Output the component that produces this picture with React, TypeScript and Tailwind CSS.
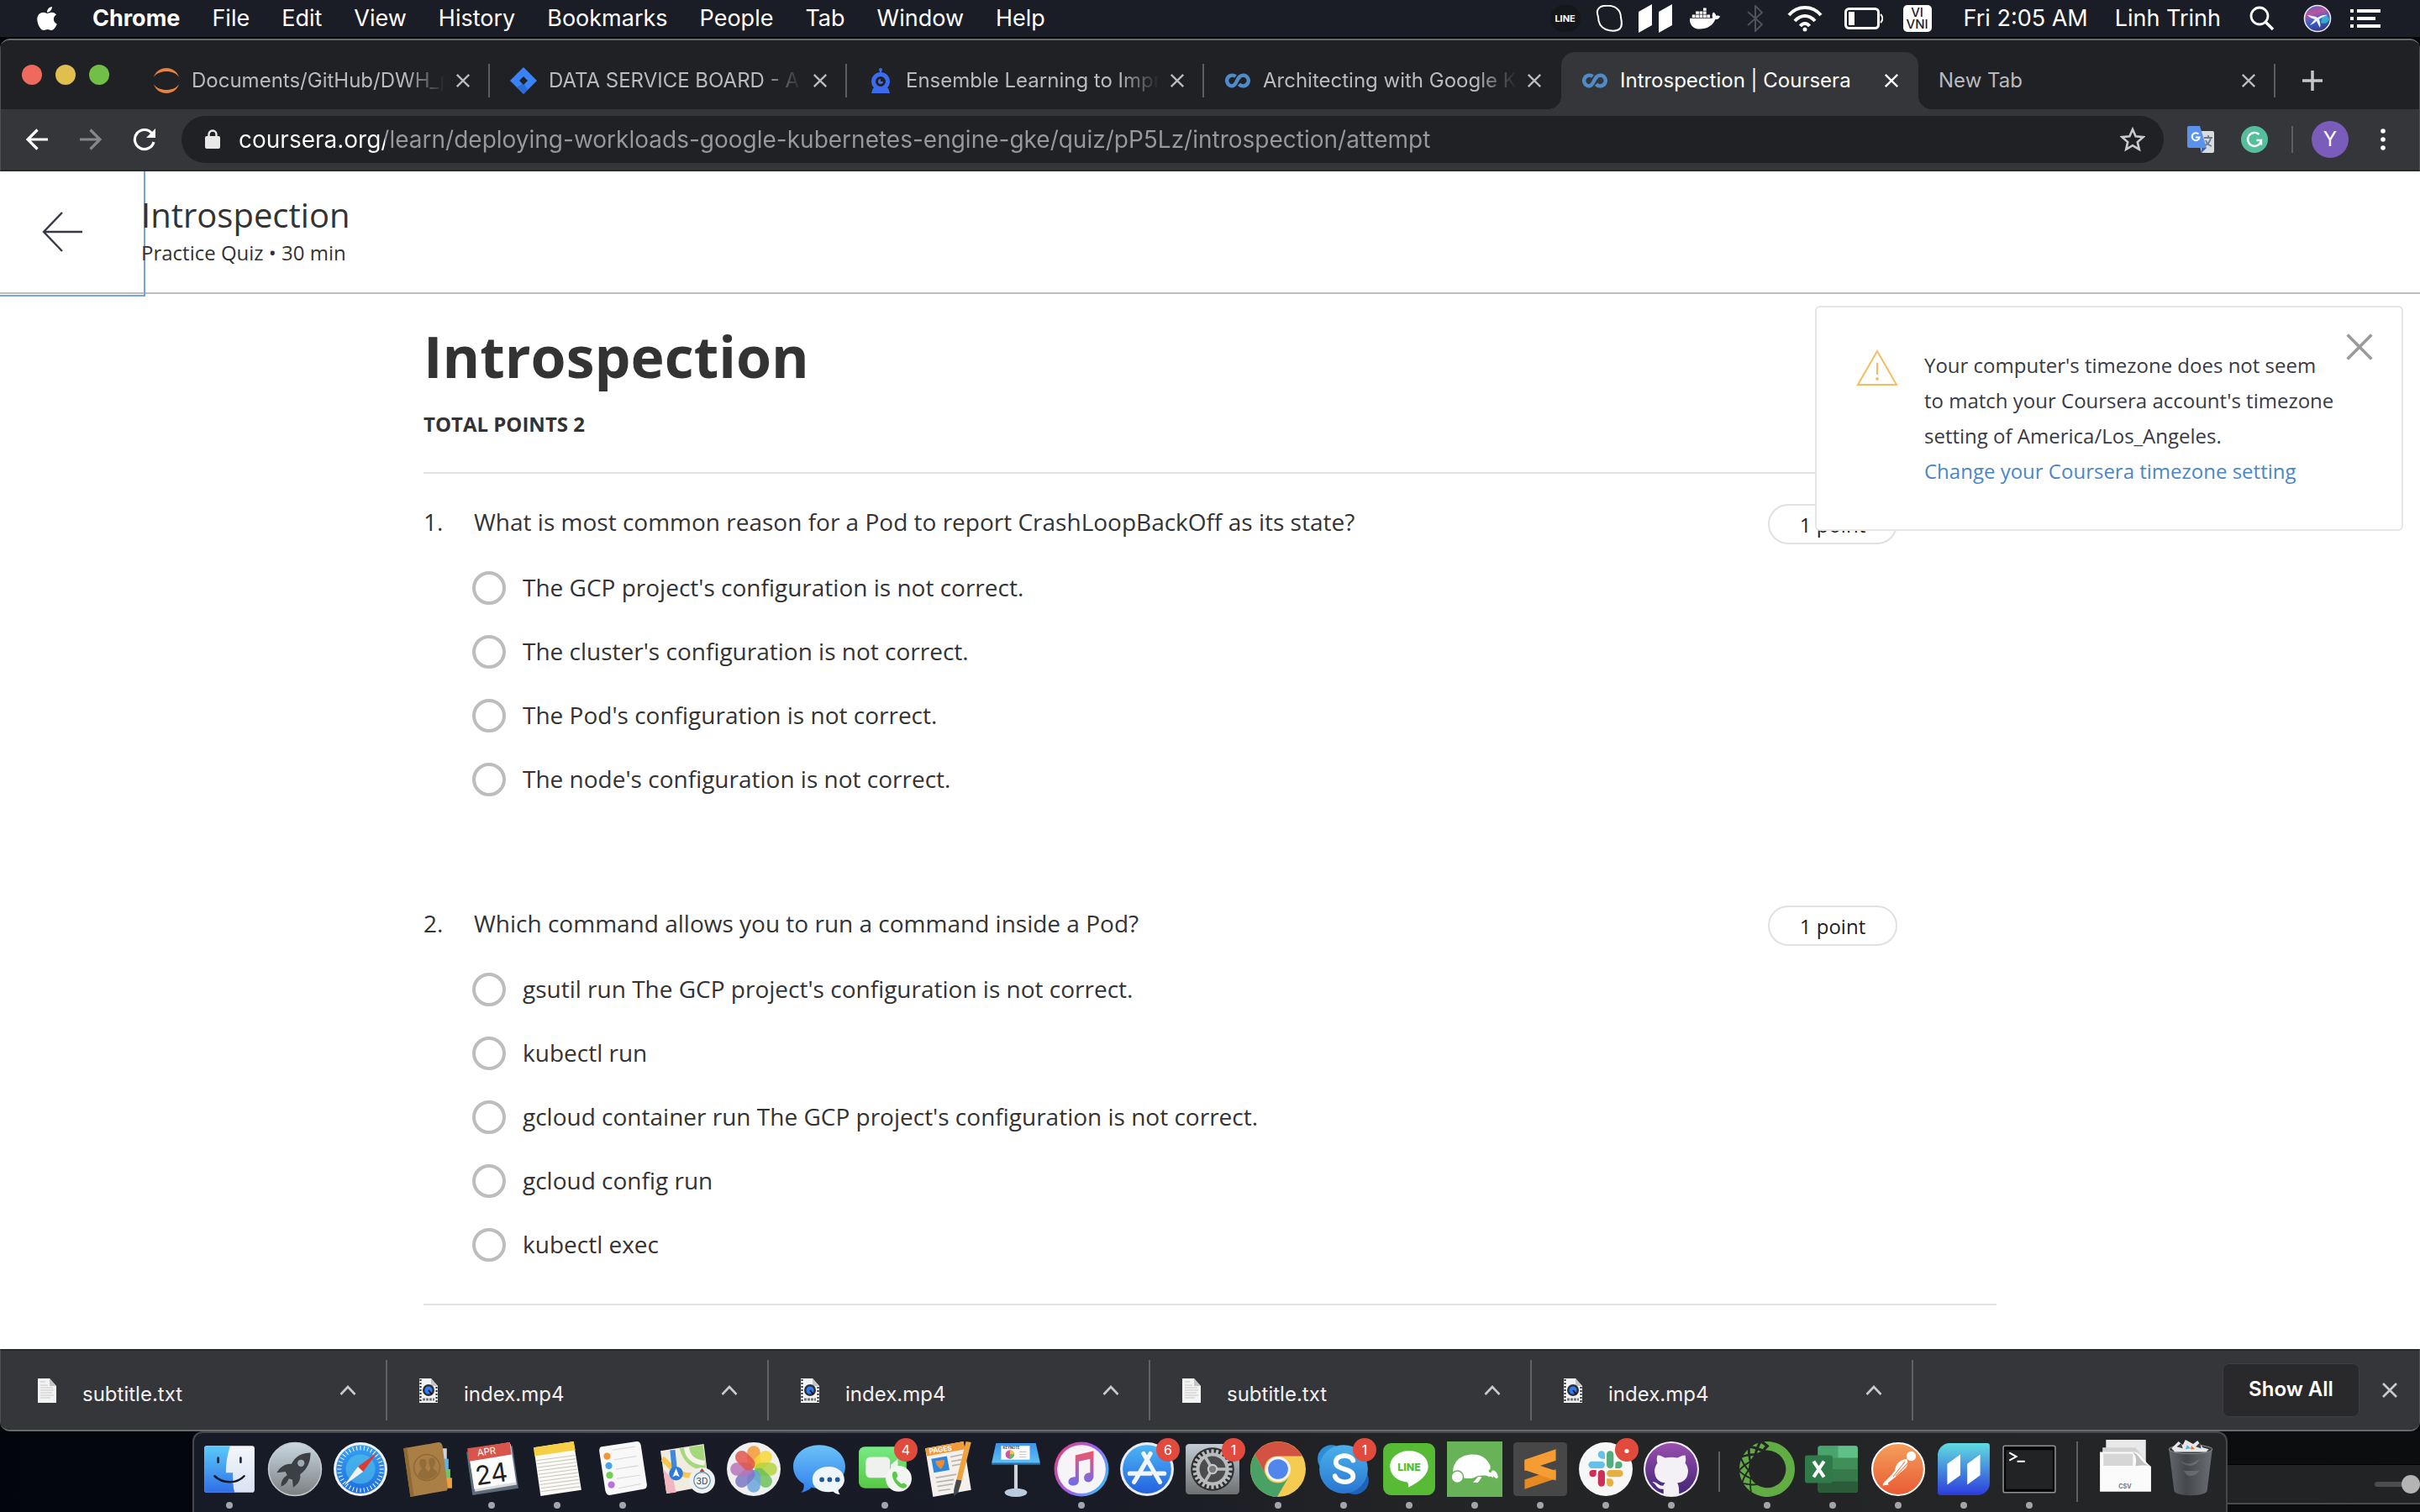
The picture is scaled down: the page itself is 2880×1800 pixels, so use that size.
import type { ReactNode } from "react";
import { FaApple, FaDocker } from "react-icons/fa";
import { SiAnaconda } from "react-icons/si";

/* ---------- small shared icons ---------- */

function CloseIcon({ className, width = 2.6 }: { className: string; width?: number }) {
  return (
    <svg viewBox="0 0 20 20" className={className} fill="none" stroke="currentColor" strokeWidth={width}>
      <path d="M2 2 18 18M18 2 2 18" />
    </svg>
  );
}

function JupyterIcon() {
  return (
    <svg viewBox="0 0 32 32" className="size-8" fill="#e8833f">
      <path d="M1 12C3 5 9 1 16 1s13 4 15 11c-3-5-9-7-15-7S4 7 1 12Z" />
      <path d="M1 20c2 7 8 11 15 11s13-4 15-11c-3 5-9 7-15 7S4 25 1 20Z" />
    </svg>
  );
}

function JiraIcon() {
  return (
    <svg viewBox="0 0 32 32" className="size-8">
      <path d="M16 0 32 16 16 32 0 16Z" fill="#3b82f6" />
      <path d="M16 32 8 24l8-5 5 8Z" fill="#2563c9" opacity=".7" />
      <path d="M16 11 21 16 16 21 11 16Z" fill="#202124" />
    </svg>
  );
}

function EnsembleIcon() {
  return (
    <svg viewBox="0 0 32 32" className="size-8" fill="none">
      <circle cx="16" cy="3" r="2" fill="#3b6cf0" />
      <path d="M16 4v5" stroke="#3b6cf0" strokeWidth="2" />
      <circle cx="16" cy="17" r="8.5" stroke="#3b6cf0" strokeWidth="5" />
      <path d="M7 25h18l2 6H5Z" fill="#3b6cf0" />
      <path d="M16 14a3 3 0 1 0 3 3h-3Z" fill="#3b6cf0" />
    </svg>
  );
}

function CourseraIcon() {
  return (
    <svg viewBox="0 0 32 18" className="w-8" fill="none" stroke="#4f8bc9" strokeWidth="4.4">
      <path d="M13.500 4A6.400 6.400 0 1 0 9 15.400C15.500 15.400 14.500 2.600 22.500 2.600a6.400 6.400 0 1 1-5 10.600" />
    </svg>
  );
}

/* ---------- menu bar ---------- */

const menus = ["File", "Edit", "View", "History", "Bookmarks", "People", "Tab", "Window", "Help"];

function MenuBar() {
  return (
    <header className="flex h-[44px] shrink-0 items-center bg-[#1a1c26] pr-[47px] pl-[40px] text-[27px] text-white">
      <FaApple className="mr-[38px] size-[32px]" />
      <nav className="flex items-center gap-[38px]">
        <button className="font-bold">Chrome</button>
        {menus.map((m) => (
          <button key={m}>{m}</button>
        ))}
      </nav>
      <div className="ml-auto flex items-center">
        <span className="flex h-8 w-9 items-center justify-center rounded-full bg-[#16171b] text-[11px] font-bold">LINE</span>
        <svg viewBox="0 0 32 32" className="ml-[18px] size-8" fill="none" stroke="#fff" strokeWidth="2">
          <path d="M6 2C10 0 21 0 25 4c4 3 5 7 5 11 1 5 2 9-1 13-4 4-12 3-17 1C5 26 3 20 3 14 1 9 1 5 6 2Z" />
        </svg>
        <svg viewBox="0 0 42 36" className="ml-[18px] h-9 w-[42px]" fill="#fff">
          <path d="M1 10 17 1v25L1 35ZM25 10 41 1v25l-16 9Z" />
        </svg>
        <FaDocker className="ml-[20px] size-[36px]" />
        <svg viewBox="0 0 20 32" className="ml-[32px] h-8 w-5" fill="none" stroke="#50525a" strokeWidth="2">
          <path d="m1 8 17 15-8 8V1l8 8L1 24" />
        </svg>
        <svg viewBox="0 0 42 32" className="ml-[28px] h-8 w-[42px]" fill="none" stroke="#fff" strokeWidth="4">
          <path d="M2 12C12 0 30 0 40 12M9 19c7-8 17-8 24 0M15.500 25c3-4 8-4 11 0" />
          <circle cx="21" cy="29" r="1.500" fill="#fff" strokeWidth="2" />
        </svg>
        <svg viewBox="0 0 46 26" className="ml-[26px] h-[26px] w-[46px]" fill="none" stroke="#fff" strokeWidth="3">
          <rect x="1.500" y="1.500" width="39" height="23" rx="4" />
          <rect x="5" y="5" width="7" height="16" fill="#fff" stroke="none" />
          <path d="M43 8c3 3 3 7 0 10" strokeWidth="2" />
        </svg>
        <span className="ml-[24px] flex h-8 w-[34px] flex-col items-center justify-center rounded-[5px] bg-white text-[15px] leading-[14px] font-medium text-[#1a1c26]">
          <span>VI</span>
          <span>VNI</span>
        </span>
        <span className="ml-[38px]">Fri 2:05 AM</span>
        <span className="ml-[32px]">Linh Trinh</span>
        <svg viewBox="0 0 30 30" className="ml-[34px] size-[30px]" fill="none" stroke="#fff" strokeWidth="2.800">
          <circle cx="12" cy="12" r="10" />
          <path d="m19 19 9 9" strokeWidth="3.400" />
        </svg>
        <svg viewBox="0 0 34 34" className="ml-[34px] size-[34px]">
          <defs>
            <linearGradient id="siri" x1=".2" y1="0" x2=".5" y2="1">
              <stop offset="0" stopColor="#4a63c8" />
              <stop offset=".3" stopColor="#c0559c" />
              <stop offset=".6" stopColor="#3a5fd0" />
              <stop offset="1" stopColor="#3a3a8a" />
            </linearGradient>
          </defs>
          <circle cx="17" cy="17" r="15.500" fill="url(#siri)" stroke="#e8e8f0" strokeWidth="1.600" />
          <path d="M23 14c5-1 7 0 8 4-2 5-6 6-10 4Z" fill="#35c3c9" opacity=".8" />
          <path d="M5 13c5 1 9 1 12 3 4-2 7-4 12-3-5 2-8 3-10 5 1 3 2 7 1 10-2-3-3-6-4-8-2 2-5 4-8 5 2-3 4-5 6-7-4-1-6-2-9-5Z" fill="#e9f4ff" />
        </svg>
        <svg viewBox="0 0 36 22" className="ml-[22px] h-[22px] w-9" fill="#fff">
          <path d="M0 0h4v4H0zM8 0h28v4H8zM0 9h4v4H0zM8 9h22v4H8zM0 18h4v4H0zM8 18h28v4H8z" />
        </svg>
      </div>
    </header>
  );
}

/* ---------- browser chrome ---------- */

type TabInfo = { title: string; icon?: ReactNode; active?: boolean; divider?: boolean; fade?: boolean };

const tabs: TabInfo[] = [
  { title: "Documents/GitHub/DWH_p", icon: <JupyterIcon />, divider: true, fade: true },
  { title: "DATA SERVICE BOARD - A", icon: <JiraIcon />, divider: true, fade: true },
  { title: "Ensemble Learning to Impr", icon: <EnsembleIcon />, divider: true, fade: true },
  { title: "Architecting with Google K", icon: <CourseraIcon />, fade: true },
  { title: "Introspection | Coursera", icon: <CourseraIcon />, active: true },
  { title: "New Tab", divider: true },
];

const activeTab =
  "relative rounded-t-[16px] bg-[#35363a] text-white before:absolute before:bottom-0 before:-left-4 before:size-4 before:bg-[radial-gradient(circle_at_0_0,transparent_16px,#35363a_16px)] after:absolute after:-right-4 after:bottom-0 after:size-4 after:bg-[radial-gradient(circle_at_100%_0,transparent_16px,#35363a_16px)]";

function Tab({ tab }: { tab: TabInfo }) {
  return (
    <div className={`flex h-[68px] w-[425px] min-w-0 items-center pl-6 ${tab.active ? activeTab : "text-[#b9bbbe]"}`}>
      {tab.icon && <span className="mr-[14px] flex w-8 shrink-0">{tab.icon}</span>}
      <span
        className={`flex-1 overflow-hidden text-[24px] whitespace-nowrap ${
          tab.fade ? "[mask-image:linear-gradient(to_right,#000_calc(100%-48px),transparent)]" : ""
        }`}
      >
        {tab.title}
      </span>
      <button aria-label={`Close ${tab.title}`} className="mr-[21px] ml-[12px]">
        <CloseIcon className="size-[18px]" />
      </button>
      <span className={`h-10 w-[2px] ${tab.divider ? "bg-[#5b5d61]" : ""}`} />
    </div>
  );
}

function TabStrip() {
  return (
    <div className="flex h-[82px] shrink-0 items-end border-x border-[#4d4f51] bg-[#202124]">
      <div className="flex h-full w-[157px] shrink-0 items-center gap-4 pl-[25px]">
        <button aria-label="Close window" className="size-6 rounded-full bg-[#ee6a5e]" />
        <button aria-label="Minimise window" className="size-6 rounded-full bg-[#e0bf4e]" />
        <button aria-label="Zoom window" className="size-6 rounded-full bg-[#72bf47]" />
      </div>
      {tabs.map((t) => (
        <Tab key={t.title} tab={t} />
      ))}
      <button aria-label="New tab" className="ml-[32px] flex h-[68px] items-center text-[#c4c6c9]">
        <svg viewBox="0 0 24 24" className="size-6" stroke="currentColor" strokeWidth="3.500">
          <path d="M12 0v24M0 12h24" />
        </svg>
      </button>
    </div>
  );
}

function Toolbar() {
  return (
    <div className="flex h-[74px] shrink-0 items-center border-x border-b-2 border-x-[#4d4f51] border-b-[#28292c] bg-[#35363a] pr-[34px] pl-[30px]">
      <button aria-label="Back" className="text-white">
        <svg viewBox="0 0 26 26" className="size-[26px]" fill="none" stroke="currentColor" strokeWidth="3.200">
          <path d="M26 13H2M13.500 1.500 2 13l11.500 11.500" />
        </svg>
      </button>
      <button aria-label="Forward" className="ml-[38px] text-[#85878a]">
        <svg viewBox="0 0 26 26" className="size-[26px]" fill="none" stroke="currentColor" strokeWidth="3.200">
          <path d="M0 13h24M12.500 1.500 24 13 12.500 24.500" />
        </svg>
      </button>
      <button aria-label="Reload" className="ml-[37px] text-white">
        <svg viewBox="0 0 28 28" className="size-7" fill="none" stroke="currentColor" strokeWidth="3.200">
          <path d="M23 7a11.500 11.500 0 1 0 2 10" />
          <path d="M27 1v11H16Z" fill="currentColor" stroke="none" />
        </svg>
      </button>
      <div className="ml-[30px] flex h-14 flex-1 items-center rounded-full bg-[#202124] pr-[22px] pl-7">
        <svg viewBox="0 0 18 24" className="h-6 w-[18px]" fill="#e8e8e8">
          <rect y="8" width="18" height="15" rx="2" />
          <path d="M4.500 9V6a4.500 4.500 0 0 1 9 0v3" fill="none" stroke="#e8e8e8" strokeWidth="2.400" />
        </svg>
        <input
          aria-label="Address"
          defaultValue="coursera.org/learn/deploying-workloads-google-kubernetes-engine-gke/quiz/pP5Lz/introspection/attempt"
          className="ml-[22px] flex-1 bg-[linear-gradient(to_right,#fff_174px,#97999c_174px)] bg-clip-text text-[28px] text-transparent outline-none"
        />
        <button aria-label="Bookmark this page" className="text-[#c9cacc]">
          <svg viewBox="0 0 30 30" className="size-[30px]" fill="none" stroke="currentColor" strokeWidth="2.600">
            <path d="m15 3 3.600 8.300 9 .8-6.800 6 2 8.800L15 22.200l-7.800 4.700 2-8.800-6.800-6 9-.8Z" />
          </svg>
        </button>
      </div>
      <button aria-label="Translate" className="ml-[27px]">
        <svg viewBox="0 0 34 34" className="size-[34px]">
          <path d="M12 7h19a2 2 0 0 1 2 2v22a2 2 0 0 1-2 2H18Z" fill="#d9dbde" />
          <path d="M1 3a2 2 0 0 1 2-2h13l8 26H3a2 2 0 0 1-2-2Z" fill="#5a93ee" />
          <path d="m18 27 6 0-6 6Z" fill="#3c62c0" />
          <path d="M21 15h10M26 12v3M29 15c-1 5-4 8-7 9M23 18c1 3 4 6 7 7" fill="none" stroke="#6f7c8c" strokeWidth="1.800" />
          <path d="M14.500 10.500a4.500 4.500 0 1 0 1.200 4H11" fill="none" stroke="#fff" strokeWidth="2" />
        </svg>
      </button>
      <button aria-label="Grammarly" className="ml-[30px]">
        <svg viewBox="0 0 34 34" className="size-[34px]">
          <circle cx="17" cy="17" r="16" fill="#55bf9b" />
          <path d="M22.500 11A8 8 0 1 0 25 18h-5.500M25 18v5.500" fill="none" stroke="#fff" strokeWidth="2.400" />
        </svg>
      </button>
      <span className="ml-[27px] h-8 w-[2px] bg-[#5b5d61]" />
      <button className="ml-[22px] flex size-[44px] items-center justify-center rounded-full bg-[#7a5cbb] text-[24px] text-white">Y</button>
      <button aria-label="Chrome menu" className="ml-[32px] p-[6px]">
        <svg viewBox="0 0 6 26" className="h-[26px] w-[6px]" fill="#fff">
          <circle cx="3" cy="3" r="2.800" />
          <circle cx="3" cy="13" r="2.800" />
          <circle cx="3" cy="23" r="2.800" />
        </svg>
      </button>
    </div>
  );
}

/* ---------- quiz page ---------- */

const questions = [
  {
    text: "What is most common reason for a Pod to report CrashLoopBackOff as its state?",
    options: [
      "The GCP project's configuration is not correct.",
      "The cluster's configuration is not correct.",
      "The Pod's configuration is not correct.",
      "The node's configuration is not correct.",
    ],
  },
  {
    text: "Which command allows you to run a command inside a Pod?",
    options: [
      "gsutil run The GCP project's configuration is not correct.",
      "kubectl run",
      "gcloud container run The GCP project's configuration is not correct.",
      "gcloud config run",
      "kubectl exec",
    ],
  },
];

function QuizPage() {
  return (
    <div className="relative flex-1 overflow-hidden bg-white font-['Open_Sans',sans-serif] text-[#333]">
      <div className="flex h-[146px] border-b-2 border-[#bdbdbd]">
        <button
          aria-label="Back to course"
          className="w-[168px] outline-2 outline-offset-[3px] outline-[#76a3e6]"
        >
          <svg viewBox="0 0 48 48" className="ml-[50px] size-12" fill="none" stroke="#373a44" strokeWidth="2.400">
            <path d="M48 24H2M24 1 2 24l22 23" />
          </svg>
        </button>
        <div className="pt-[28px]">
          <p className="text-[40px] leading-[48px]">Introspection</p>
          <p className="text-[24px] leading-[42px]">Practice Quiz • 30 min</p>
        </div>
      </div>

      <main className="mx-auto max-w-[1872px] pt-[34px]">
        <h1 className="text-[68px] leading-[80px] font-bold">Introspection</h1>
        <p className="mt-[25px] text-[24px] leading-8 font-bold">TOTAL POINTS 2</p>
        <hr className="mt-[41px] border-t-2 border-[#e1e1e1]" />
        <div className="mt-9 flex flex-col gap-[130px]">
          {questions.map((q, qi) => (
            <fieldset key={q.text} className="text-[28px] leading-[42px]">
              <div className="flex items-start">
                <span className="w-[60px] shrink-0">{qi + 1}.</span>
                <p className="flex-1">{q.text}</p>
                <span className="mr-[118px] -mb-[6px] flex h-12 w-[154px] shrink-0 items-center justify-center rounded-full border-2 border-[#e1e1e1] pt-[2px] text-[24px] leading-8 text-[#1f1f1f]">
                  1 point
                </span>
              </div>
              <div className="mt-[38px] ml-[58px] flex flex-col gap-9">
                {q.options.map((o, oi) => (
                  <label key={o} htmlFor={`q${qi}-${oi}`} className="flex h-10 items-center">
                    <input
                      id={`q${qi}-${oi}`}
                      type="radio"
                      name={`question-${qi}`}
                      className="size-10 appearance-none rounded-full border-4 border-[#bdbdbd]"
                    />
                    <span className="ml-[20px] pb-[2px]">{o}</span>
                  </label>
                ))}
              </div>
            </fieldset>
          ))}
        </div>
        <hr className="mt-[50px] border-t-2 border-[#e1e1e1]" />
      </main>

      <aside className="absolute top-[160px] right-5 flex w-[700px] rounded-md border-2 border-[#e5e5e5] bg-white py-12 pl-[47px] text-[24px] leading-[42px] text-[#373a44]">
        <svg viewBox="0 0 50 44" className="mt-[2px] h-[44px] w-[50px] shrink-0" fill="none" stroke="#f5bd60" strokeWidth="2">
          <path d="M25 2 48 42H2Z" />
          <path d="M25 16v14" />
          <circle cx="25" cy="35" r="1.400" fill="#f5bd60" strokeWidth="1" />
        </svg>
        <div className="ml-[31px] w-[492px]">
          <p>Your computer's timezone does not seem to match your Coursera account's timezone setting of America/Los_Angeles.</p>
          <a href="#timezone" className="text-[#4a87c9]">
            Change your Coursera timezone setting
          </a>
        </div>
        <button aria-label="Dismiss" className="absolute top-[29px] right-[32px] text-[#9a9a9a]">
          <CloseIcon className="size-[36px]" width={2} />
        </button>
      </aside>
    </div>
  );
}

/* ---------- downloads shelf ---------- */

const downloads = ["subtitle.txt", "index.mp4", "index.mp4", "subtitle.txt", "index.mp4"];

function FileIcon({ video }: { video: boolean }) {
  return (
    <svg viewBox="0 0 22 29" className="h-[29px] w-[22px]">
      <path d="M0 0h14l8 9v20H0Z" fill="#f3f3f3" />
      <path d="M14 0v9h8Z" fill="#c4c4c4" />
      {video ? (
        <>
          <path d="M1.500 1v28M20.500 10v19" stroke="#222" strokeWidth="2" strokeDasharray="2 2" />
          <circle cx="11" cy="14" r="7" fill="#2b3038" />
          <circle cx="11" cy="14" r="4.500" fill="#2f7df6" />
          <path d="m11 14 4 5" stroke="#111" strokeWidth="2" />
          <path d="M4 25h14" stroke="#777" strokeWidth="3" strokeDasharray="3 1" />
        </>
      ) : (
        <path d="M3 4h6M3 8h9M3 11h15M3 14h16M3 17h14M3 20h16M3 23h12" stroke="#c8c8c8" strokeWidth="1" />
      )}
    </svg>
  );
}

function DownloadShelf() {
  return (
    <div className="flex h-[96px] shrink-0 items-center border-x border-t-2 border-x-[#4d4f51] border-t-[#28292c] bg-[#35363a] pr-[25px] pl-[6px] text-[24px] text-[#f1f1f1]">
      {downloads.map((name, i) => (
        <div key={i} className="flex h-[72px] w-[454px] items-center border-r-2 border-[#5f6165] pr-[35px] pl-[38px]">
          <FileIcon video={name.endsWith("mp4")} />
          <span className="ml-[31px] pt-[10px]">{name}</span>
          <button aria-label={`Options for ${name}`} className="ml-auto text-[#c9cacc]">
            <svg viewBox="0 0 20 12" className="w-5" fill="none" stroke="currentColor" strokeWidth="2.600">
              <path d="m1.500 11 8.500-9 8.500 9" />
            </svg>
          </button>
        </div>
      ))}
      <button className="mr-[26px] ml-auto h-16 w-[163px] rounded-lg border border-[#3d3e42] bg-[#29292c] pb-[2px] font-semibold text-white">
        Show All
      </button>
      <button aria-label="Close downloads bar" className="text-[#c9cacc]">
        <CloseIcon className="size-[20px]" />
      </button>
    </div>
  );
}

/* ---------- dock ---------- */

function Gradient({ id, from, to }: { id: string; from: string; to: string }) {
  return (
    <linearGradient id={id} x1="0" y1="0" x2="0" y2="1">
      <stop offset="0" stopColor={from} />
      <stop offset="1" stopColor={to} />
    </linearGradient>
  );
}

function Art({ children }: { children: ReactNode }) {
  return (
    <svg viewBox="0 0 64 64" className="size-[66px] overflow-visible font-[Inter,sans-serif]">
      {children}
    </svg>
  );
}

const petals = ["#f39a34", "#f5d938", "#b5d33d", "#6fbf5a", "#6aa5dd", "#7a78c4", "#b774b8", "#e2574c"];
const ticks = Array.from({ length: 36 }, (_, i) => i * 10);
const teeth = Array.from({ length: 24 }, (_, i) => i * 15);

type DockItem = { name: string; art: ReactNode; running?: boolean; badge?: string };

const apps: DockItem[] = [
  {
    name: "Finder",
    running: true,
    art: (
      <Art>
        <Gradient id="fl" from="#5ccbfa" to="#2f6fe8" />
        <Gradient id="fr" from="#f4f6fa" to="#d9e3f3" />
        <rect x="3" y="5" width="58" height="54" rx="3" fill="url(#fr)" />
        <path d="M6 5h27c-3 9-5 19-5 31h8c0 8 0 16 2 23H6a3 3 0 0 1-3-3V8a3 3 0 0 1 3-3Z" fill="url(#fl)" />
        <path d="M19 19v5M45 19v5" stroke="#1b2a44" strokeWidth="2.600" strokeLinecap="round" />
        <path d="M15 40c9 9 26 9 34 0" fill="none" stroke="#101a2c" strokeWidth="2.400" strokeLinecap="round" />
      </Art>
    ),
  },
  {
    name: "Launchpad",
    art: (
      <Art>
        <Gradient id="lp" from="#c9d8e0" to="#7d7f80" />
        <circle cx="32" cy="32" r="30.500" fill="url(#lp)" stroke="#c6cacc" strokeWidth="1.500" />
        <path d="M50 13c-11 0-18 5-22 13-6-1-13 3-17 10l10-1 2 4c-5 3-7 7-7 13 4-1 7-4 9-9l4 1 1 9c6-4 9-9 8-15 8-6 12-14 12-25Z" fill="#3c4045" />
        <circle cx="39" cy="25" r="4" fill="#9fabb2" />
      </Art>
    ),
  },
  {
    name: "Safari",
    art: (
      <Art>
        <Gradient id="sf" from="#35a0f3" to="#1f6ee0" />
        <circle cx="32" cy="32" r="31" fill="#eef1f4" />
        <circle cx="32" cy="32" r="28" fill="url(#sf)" />
        <circle cx="32" cy="32" r="17" fill="#55c9ea" opacity=".55" />
        {ticks.map((a) => (
          <path key={a} d="M32 5v5" stroke="#fff" strokeWidth="1" transform={`rotate(${a} 32 32)`} />
        ))}
        <path d="M51 13 35 35l-6-6Z" fill="#e4392f" />
        <path d="M13 51 29 29l6 6Z" fill="#f3f3f3" />
      </Art>
    ),
  },
  {
    name: "Contacts",
    art: (
      <Art>
        <path d="M50 8h6v14h-6Z" fill="#cfd4da" />
        <path d="M51 20h7v13h-7Z" fill="#58b7ea" />
        <path d="M53 32h7v12h-7Z" fill="#6cc76a" />
        <path d="M54 42h8v12h-8Z" fill="#f0a13c" />
        <path d="M6 8 46 1c3 0 4 1 5 4l6 48c0 3-1 4-3 4l-40 7Z" fill="#a97f45" />
        <path d="m6 8 4-1 8 56-4 1Z" fill="#8f6a35" />
        <circle cx="33" cy="30" r="15" fill="none" stroke="#8f6a38" strokeWidth="1.500" />
        <path d="M23 40c0-7 4-6 4-9-4-5-3-11 1-11 5 0 6 5 3 10 1 3 3 3 4 6 0-3 2-3 2-6-3-5-3-11 2-11 4 0 5 7 1 11 1 3 5 3 5 7-6 7-15 9-22 3Z" fill="#926d3a" />
      </Art>
    ),
  },
  {
    name: "Calendar",
    running: true,
    art: (
      <Art>
        <path d="m3 12 7 50 53-8L56 5Z" fill="#5e6d7b" />
        <path d="m5 9 8 49 48-8L54 3Z" fill="#dcdcdc" />
        <path d="m5 9 7 46 48-8L53 1Z" fill="#fdfdfd" />
        <path d="m4 8 49-7 2 14-49 8Z" fill="#d9544a" />
        <g transform="rotate(-8 32 32)">
          <text x="29" y="15" fontSize="11" fill="#fff" textAnchor="middle">APR</text>
          <text x="31" y="48" fontSize="30" fill="#222" textAnchor="middle">24</text>
        </g>
      </Art>
    ),
  },
  {
    name: "Notes",
    running: true,
    art: (
      <Art>
        <path d="M5 7 51 0l9 56-47 7Z" fill="#fbfaf4" />
        <path d="M5 7 51 0l2 10L6 17Z" fill="#f6cf45" />
        {[0, 1, 2, 3, 4, 5, 6, 7, 8, 9].map((i) => (
          <path key={i} d="m8 22 45-6" stroke="#c9c9c2" strokeWidth="1" transform={`translate(${i * 0.6} ${i * 4})`} />
        ))}
      </Art>
    ),
  },
  {
    name: "Reminders",
    running: true,
    art: (
      <Art>
        <path d="M8 6 48 0c3 0 4 1 5 4l7 46c0 3-1 5-4 5l-39 7c-3 0-4-2-5-5L5 11c0-3 1-5 3-5Z" fill="#f8f8f8" />
        <circle cx="14" cy="17" r="4" fill="#f0973b" />
        <circle cx="16" cy="28" r="4" fill="#43a5ee" />
        <circle cx="17" cy="39" r="4" fill="#72cf52" />
        <circle cx="19" cy="50" r="4" fill="#b873d8" />
        <path d="m20 10 26-4M22 21l26-4M24 32l26-4M25 43l27-4M27 54l26-5" stroke="#d6d6d6" strokeWidth="1" />
      </Art>
    ),
  },
  {
    name: "Maps",
    art: (
      <Art>
        <path d="m0 11 50-8 6 48-49 9Z" fill="#f1ece0" />
        <path d="m22 8 27-4 4 30C37 33 26 24 22 8Z" fill="#a5d87c" />
        <path d="M30 7c1 10 8 17 21 18" fill="none" stroke="#f6f3ec" strokeWidth="6" />
        <path d="m3 32 12 12 3 15-11 1Z" fill="#f2b6c0" />
        <path d="M2 20c8 4 14 24 44 18" fill="none" stroke="#f7c64d" strokeWidth="6" />
        <path d="m14 10 3 30" stroke="#3f88dd" strokeWidth="6" />
        <circle cx="18" cy="37" r="8" fill="#2f7bdb" />
        <path d="m18 31 4 10-4-2-4 2Z" fill="#fff" />
        <circle cx="48" cy="45" r="15" fill="#eef0f2" />
        <circle cx="48" cy="45" r="9.500" fill="none" stroke="#5a8aa8" strokeWidth="1.200" />
        <path d="m48 31 3 4h-6Z" fill="#d8362d" />
        <text x="48" y="49" fontSize="10" fill="#444" textAnchor="middle">3D</text>
      </Art>
    ),
  },
  {
    name: "Photos",
    art: (
      <Art>
        <circle cx="32" cy="32" r="31" fill="#f0f0f0" />
        {petals.map((c, i) => (
          <rect key={c} x="24.500" y="5" width="15" height="26" rx="7.500" fill={c} opacity=".85" transform={`rotate(${i * 45} 32 32)`} />
        ))}
      </Art>
    ),
  },
  {
    name: "Messages",
    art: (
      <Art>
        <Gradient id="ms" from="#6cc2f7" to="#2f7fee" />
        <path d="M32 4c17 0 30 11 30 25S49 54 32 54c-4 0-6 0-9-1-3 3-7 5-12 6 3-3 4-6 3-10C6 44 2 37 2 29 2 15 15 4 32 4Z" fill="url(#ms)" />
        <path d="M43 29c10 0 18 6 18 15 0 5-3 9-7 12 0 2 1 4 2 5-4 0-6-1-8-3-15 2-24-5-24-14s8-15 19-15Z" fill="#eef6fb" />
        <circle cx="35" cy="44" r="2.800" fill="#22589e" />
        <circle cx="44" cy="44" r="2.800" fill="#22589e" />
        <circle cx="53" cy="44" r="2.800" fill="#22589e" />
      </Art>
    ),
  },
  {
    name: "FaceTime",
    running: true,
    badge: "4",
    art: (
      <Art>
        <Gradient id="ft" from="#77ea84" to="#58c944" />
        <rect x="2" y="6" width="55" height="48" rx="7" fill="url(#ft)" />
        <rect x="10" y="18" width="28" height="24" rx="5" fill="#eef1ee" />
        <path d="m39 27 8-7v20l-8-6Z" fill="#eef1ee" />
        <circle cx="48" cy="43" r="15" fill="#f3f5f3" />
        <path d="M41 36c2-2 4-2 5 1l1 3-2 3c2 3 4 4 6 6l3-1 3 2c1 2-1 4-3 4-7 0-15-11-13-18Z" fill="#5bcb47" />
      </Art>
    ),
  },
  {
    name: "Pages",
    art: (
      <Art>
        <path d="M3 8 47 0l9 56-44 8Z" fill="#f4f1ec" />
        <path d="M3 8 47 0l2 9L5 17Z" fill="#f2993a" />
        <text x="8" y="14" fontSize="8" fontWeight="700" fill="#fff" transform="rotate(-8 8 14)">PAGES</text>
        <path d="m10 20 18-3 3 16-18 3Z" fill="#2f86dd" />
        <path d="M15 22c4 1 6-1 10-1 1 5-2 8-4 11-3-3-6-5-6-10Z" fill="#f18a2c" />
        <path d="m32 18 14-3M33 23l12-2M34 28l11-2M15 42l24-4M16 47l20-3M17 52l18-3M18 57l14-2" stroke="#b7b3ad" strokeWidth="1.600" />
        <path d="m50 0 6 1-13 52-6-1Z" fill="#f0a23c" />
        <path d="m39 44 6 1-4 14-5 4 0-7Z" fill="#44474b" />
      </Art>
    ),
  },
  {
    name: "Keynote",
    art: (
      <Art>
        <Gradient id="kn" from="#3d93ea" to="#5fc0f5" />
        <path d="M9 2h46l5 23H4Z" fill="url(#kn)" />
        <path d="M4 25h56v2H4Z" fill="#2d6fae" />
        <rect x="15" y="5" width="33" height="16" fill="#fbfbfb" />
        <text x="17" y="9" fontSize="4" fontWeight="700" fill="#444">KEYNOTE</text>
        <circle cx="25" cy="15" r="5" fill="#d34fae" />
        <path d="M25 15v-5a5 5 0 0 1 5 5Z" fill="#f6c63d" />
        <path d="M25 15h5a5 5 0 0 1-5 5Z" fill="#5fc05a" />
        <path d="M36 12h8M36 15h8M36 18h8" stroke="#c9c9c9" />
        <path d="M32 27v33" stroke="#cdd3d8" strokeWidth="4" />
        <ellipse cx="32" cy="59" rx="13" ry="5" fill="#b9cbe0" />
      </Art>
    ),
  },
  {
    name: "iTunes",
    running: true,
    art: (
      <Art>
        <linearGradient id="it" x1="0" y1=".2" x2="1" y2=".8">
          <stop offset="0" stopColor="#e0417c" />
          <stop offset=".5" stopColor="#a25df0" />
          <stop offset="1" stopColor="#36c3f2" />
        </linearGradient>
        <Gradient id="note" from="#f2566a" to="#6a6df0" />
        <circle cx="32" cy="32" r="31.500" fill="url(#it)" />
        <circle cx="32" cy="32" r="28" fill="#f6f4f7" />
        <path d="M25 16 46 11v29c0 4-3 7-6 7s-5-2-5-5c0-4 3-6 7-6V20l-13 3v22c0 4-3 6-7 6-3 0-5-2-5-4 0-4 3-6 8-6Z" fill="url(#note)" />
      </Art>
    ),
  },
  {
    name: "App Store",
    badge: "6",
    art: (
      <Art>
        <Gradient id="as" from="#4cb6f5" to="#2362e0" />
        <circle cx="32" cy="32" r="31" fill="#e9edf2" />
        <circle cx="32" cy="32" r="28" fill="url(#as)" />
        <path d="m36 14-17 30M28 14l19 33M12 37h24M44 37h8M17 47l2-3" stroke="#f2f6fa" strokeWidth="5" strokeLinecap="round" />
      </Art>
    ),
  },
  {
    name: "System Preferences",
    badge: "1",
    art: (
      <Art>
        <Gradient id="sp" from="#c2ccd4" to="#6f7072" />
        <rect x="1" y="3" width="62" height="58" rx="4" fill="url(#sp)" />
        <circle cx="32" cy="32" r="25" fill="#2e2f31" />
        {teeth.map((a) => (
          <rect key={a} x="30.500" y="9" width="3" height="6" fill="#b9bbbd" transform={`rotate(${a} 32 32)`} />
        ))}
        <circle cx="32" cy="32" r="17" fill="#4b4c4e" stroke="#b9bbbd" strokeWidth="4" />
        <path d="M32 32h17M32 32 23 17M32 32l-9 15" stroke="#b9bbbd" strokeWidth="3.500" />
        <circle cx="32" cy="32" r="5" fill="#77797b" stroke="#c8cacc" strokeWidth="2" />
      </Art>
    ),
  },
  {
    name: "Google Chrome",
    running: true,
    art: (
      <Art>
        <circle cx="32" cy="32" r="32" fill="#f6cb52" />
        <path d="M5 15a32 32 0 0 1 55 2H32a15 15 0 0 0-14 22Z" fill="#d35343" />
        <path d="M5 15a32 32 0 0 0 26 49l14-24a15 15 0 0 1-27-1Z" fill="#4aa165" />
        <circle cx="32" cy="32" r="14.500" fill="#f4f4f4" />
        <circle cx="32" cy="32" r="11.500" fill="#5187ec" />
      </Art>
    ),
  },
  {
    name: "Skype",
    running: true,
    badge: "1",
    art: (
      <Art>
        <Gradient id="sk" from="#4bb2ea" to="#2b76d2" />
        <circle cx="18" cy="20" r="16" fill="#2f8fd6" />
        <circle cx="45" cy="45" r="16" fill="#1f62b8" />
        <circle cx="32" cy="32" r="28" fill="url(#sk)" />
        <path d="M43 22c-3-8-20-7-20 2 0 10 20 6 20 16 0 9-18 9-21 0" fill="none" stroke="#fff" strokeWidth="5.500" strokeLinecap="round" />
      </Art>
    ),
  },
  {
    name: "LINE",
    running: true,
    art: (
      <Art>
        <rect x="2" y="2" width="60" height="60" rx="9" fill="#57bb35" />
        <path d="M32 11c13 0 22 8 22 18 0 9-9 17-23 24 0-3 0-5-1-6-12-1-20-9-20-18 0-10 9-18 22-18Z" fill="#fff" />
        <text x="32" y="34" fontSize="12" fontWeight="800" fill="#57bb35" textAnchor="middle">LINE</text>
      </Art>
    ),
  },
  {
    name: "Sequel client",
    running: true,
    art: (
      <Art>
        <rect width="64" height="64" fill="#68b258" />
        <path d="M7 34C8 21 18 15 30 15c11 0 17 6 20 13v6c5-2 8 1 9 7-1 3-3 2-5-1l-1 2-3-2-1 1c-5-3-10-1-14-1-6 4-14 3-20 1-4 1-7-3-8-7Z" fill="#fff" />
        <ellipse cx="12" cy="41" rx="7" ry="7" fill="#fff" stroke="#68b258" strokeWidth="1.500" />
        <path d="m41 41-5 7h-7l7-8Z" fill="#fff" stroke="#68b258" />
        <circle cx="50" cy="34" r="1.800" fill="#68b258" />
      </Art>
    ),
  },
  {
    name: "Sublime Text",
    running: true,
    art: (
      <Art>
        <rect x="1" y="1" width="62" height="62" rx="4" fill="#474747" />
        <path d="M14 21 50 9v13L14 34Z" fill="#f59d33" />
        <path d="M14 44 50 32v11L14 55Z" fill="#e58a20" />
        <path d="m14 22 36 12v11L14 33Z" fill="#f59d33" />
      </Art>
    ),
  },
  {
    name: "Slack",
    running: true,
    badge: "•",
    art: (
      <Art>
        <circle cx="32" cy="32" r="31" fill="#f7f7f7" />
        <g transform="translate(0 -1)">
          <rect x="12" y="24" width="19" height="8" rx="4" fill="#63c1ea" />
          <path d="M31 21V16a4 4 0 0 0-8 0 5 5 0 0 0 5 5Z" fill="#63c1ea" />
          <rect x="33" y="12" width="8" height="20" rx="4" fill="#53ae7f" />
          <path d="M43 32h5a4 4 0 1 0-5-4Z" fill="#53ae7f" />
          <rect x="33" y="34" width="19" height="8" rx="4" fill="#e3b142" />
          <path d="M33 44v5a4 4 0 0 0 8 0c0-3-2-5-4-5Z" fill="#e3b142" />
          <rect x="23" y="34" width="8" height="19" rx="4" fill="#cd2f59" />
          <path d="M21 34h-5a4 4 0 1 0 5 4Z" fill="#cd2f59" />
        </g>
      </Art>
    ),
  },
  {
    name: "GitHub Desktop",
    running: true,
    art: (
      <Art>
        <Gradient id="gh" from="#9a4fae" to="#3f2574" />
        <circle cx="32" cy="32" r="32" fill="#f1eef4" />
        <circle cx="32" cy="32" r="30" fill="url(#gh)" />
        <path d="M16 16c4 0 7 2 9 3 5-1 9-1 14 0 2-1 5-3 9-3 1 4 1 6 0 9 3 4 4 8 3 12-1 7-6 10-12 11 2 3 2 8 2 13a30 30 0 0 1-18 0v-6c-8 1-8-6-13-8 6-1 7 5 13 4 0-1 1-2 2-3-6-1-11-4-12-11-1-4 0-8 3-12-1-3-1-5 0-9Z" fill="#f3f1f5" />
      </Art>
    ),
  },
];

const otherApps: DockItem[] = [
  {
    name: "Anaconda",
    running: true,
    art: <SiAnaconda className="size-[66px] text-[#62ad43]" />,
  },
  {
    name: "Excel",
    running: true,
    art: (
      <Art>
        <rect x="15" y="5" width="46" height="54" rx="3" fill="#3f8f57" />
        <path d="M38 5h20a3 3 0 0 1 3 3v11H38Z" fill="#5fc088" />
        <path d="M15 19V8a3 3 0 0 1 3-3h20v14Z" fill="#4aa46d" />
        <path d="M15 32h46v14H15Z" fill="#36794a" />
        <path d="M15 46h46v10a3 3 0 0 1-3 3H18a3 3 0 0 1-3-3Z" fill="#2b5c3a" />
        <rect x="0" y="16" width="32" height="32" rx="3" fill="#2f7a48" />
        <path d="m10 23 12 18M22 23 10 41" stroke="#fff" strokeWidth="4" />
      </Art>
    ),
  },
  {
    name: "Postman",
    running: true,
    art: (
      <Art>
        <Gradient id="pm" from="#f4a05a" to="#ea5a35" />
        <circle cx="32" cy="32" r="30" fill="url(#pm)" stroke="#fff" strokeWidth="2" />
        <circle cx="47" cy="17" r="5.500" fill="#fff" />
        <path d="M42 20c-8 1-13 6-14 14l-4 5-9 9-1 3 7-1-1-2 9-7 9-8c5-4 6-8 4-13Z" fill="#fff" />
        <path d="M40 23 26 41M43 25 29 40" stroke="#ee7a45" />
      </Art>
    ),
  },
  {
    name: "Notion client",
    running: true,
    art: (
      <Art>
        <Gradient id="nt" from="#5fdde0" to="#2d3bdc" />
        <path d="M16 2h43a3 3 0 0 1 3 3v43a14 14 0 0 1-14 14H5a3 3 0 0 1-3-3V16A14 14 0 0 1 16 2Z" fill="url(#nt)" />
        <path d="m13 26 15-11v24L13 50ZM36 26l15-11v24L36 50Z" fill="#fff" />
      </Art>
    ),
  },
  {
    name: "Terminal",
    running: true,
    art: (
      <Art>
        <rect x="2" y="5" width="60" height="54" rx="2" fill="#050505" stroke="#8f9293" strokeWidth="1.500" />
        <rect x="5" y="10" width="54" height="45" fill="#222324" />
        <path d="m9 13 8 4.500-8 4.500M18 23h9" fill="none" stroke="#fff" strokeWidth="2" />
      </Art>
    ),
  },
];

const files: DockItem[] = [
  {
    name: "CSV documents",
    art: (
      <Art>
        <path d="M10-2h46v40H10Z" fill="#e9e9e9" />
        <path d="M6 7h38l12 15v14H6Z" fill="#d2d2d2" />
        <path d="M3 12h40c8 1 10 10 19 17v29H3Z" fill="#fbfbfb" />
        <path d="M7 14h34v14H7Z" fill="#d6d6d6" />
        <path d="M41 12c8 3 8 12 19 16-7-1-13 0-16 0 2-7 0-12-3-16Z" fill="#bfbfbf" />
        <text x="32" y="54" fontSize="7" fontWeight="700" fill="#777" textAnchor="middle">CSV</text>
      </Art>
    ),
  },
  {
    name: "Trash",
    art: (
      <Art>
        <linearGradient id="tr" x1="0" y1="0" x2="1" y2="0">
          <stop offset="0" stopColor="#63676b" />
          <stop offset=".4" stopColor="#44484c" />
          <stop offset="1" stopColor="#6b6f73" />
        </linearGradient>
        <path d="M7 9 57 9 51 57c-1 7-37 7-38 0Z" fill="url(#tr)" />
        <ellipse cx="32" cy="9" rx="25" ry="5" fill="#36393c" stroke="#85898c" />
        <path d="m10 8 8-8 5 4 3-6 9 5 5-4 6 8 7 2-3 3H14Z" fill="#e8e8e8" />
        <path d="m16 6 5-4 2 6ZM38 6l5-5 1 7Z" fill="#3d3f42" />
        <path d="m28 4 4 4-6 1Z" fill="#55b4e8" />
        <path d="m33 5 4 4h-5Z" fill="#e0763c" />
        <path d="M20 22c8 6 14 4 22-2-2 8-14 12-22 2ZM24 34c4 8 12 8 18 0" fill="#85898d" opacity=".45" />
      </Art>
    ),
  },
];

function DockButton({ item }: { item: DockItem }) {
  return (
    <button aria-label={item.name} className="relative flex w-[78px] flex-col items-center pt-[10px]">
      {item.art}
      {item.running && <span className="mt-[6px] size-2 rounded-full bg-[#a3a5ab]" />}
      {item.badge && (
        <span className="absolute top-[6px] right-0 flex size-7 items-center justify-center rounded-full bg-[#e04b3d] text-[16px] text-white">
          {item.badge}
        </span>
      )}
    </button>
  );
}

function Dock() {
  return (
    <div className="relative flex h-24 shrink-0 justify-center bg-[linear-gradient(to_right,#03050d,#060709_50%,#0c0d0e)]">
      <div className="absolute top-[39px] right-0 flex h-[48px] w-[300px] items-center justify-end border-t border-b-2 border-t-black border-b-[#4a4b4d] bg-[#222325]">
        <span className="h-[6px] w-[32px] rounded-l-full bg-[#4c4d4f]" />
        <span className="size-[22px] rounded-full bg-[#b4b4b4]" />
      </div>
      <div className="relative flex h-full items-start rounded-t-xl border-x-2 border-t-2 border-[#45474d] bg-[linear-gradient(to_right,#171b27,#191c26_45%,#232425_60%,#242526)] px-[3px]">
        {apps.map((a) => (
          <DockButton key={a.name} item={a} />
        ))}
        <span className="mx-[17px] mt-[22px] h-[48px] w-[2px] bg-[#5f6062]" />
        {otherApps.map((a) => (
          <DockButton key={a.name} item={a} />
        ))}
        <span className="mx-[17px] mt-[10px] h-[72px] w-[2px] bg-[#5f6062]" />
        {files.map((a) => (
          <DockButton key={a.name} item={a} />
        ))}
      </div>
    </div>
  );
}

export default function App() {
  return (
    <div className="flex h-screen flex-col overflow-hidden bg-[#04060c] font-[Inter,sans-serif]">
      <MenuBar />
      <div className="mt-[2px] flex min-h-0 flex-1 flex-col overflow-hidden rounded-xl border-y-2 border-[#66686a]">
        <TabStrip />
        <Toolbar />
        <QuizPage />
        <DownloadShelf />
      </div>
      <Dock />
    </div>
  );
}
